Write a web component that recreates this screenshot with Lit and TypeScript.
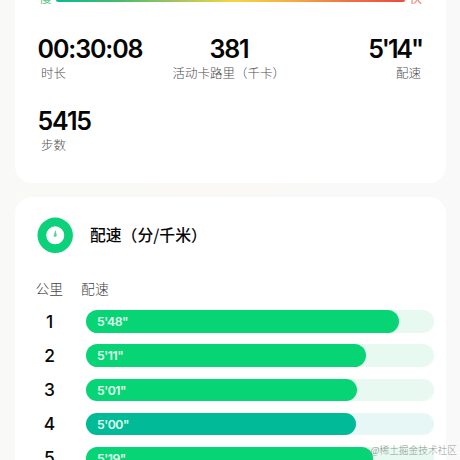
import { LitElement, html, css, svg } from "lit";
import { customElement, property } from "lit/decorators.js";
import { styleMap } from "lit/directives/style-map.js";

@customElement("stat-item")
class StatItem extends LitElement {
  @property() value = "";
  @property() label = "";
  @property({ reflect: true }) align = "start";

  static styles = css`
    :host { display: flex; flex-direction: column; }
    :host([align="center"]) { align-items: center; }
    :host([align="end"]) { align-items: flex-end; }
    .value {
      font: 600 25px/31px Inter, "Noto Sans CJK SC", sans-serif;
      letter-spacing: -1.1px;
      color: #050505;
      white-space: nowrap;
      height: 30px;
      margin-left: -0.5px;
    }
    .label {
      font: 300 12.5px/18px "Noto Sans CJK SC", sans-serif;
      color: #4c4c4c;
      white-space: nowrap;
      padding: 0 3px;
      height: 18px;
    }
    :host([align="center"]) .label { padding: 0 3px 0 0; }
    :host([align="center"]) .value { margin-left: -2.5px; }
    :host([align="end"]) .label { padding: 0 1.5px; }
    :host([align="end"]) .value { letter-spacing: -2.1px; margin-right: 0.6px; }
  `;

  render() {
    return html`
      <div class="value">${this.value}</div>
      <div class="label">${this.label}</div>
    `;
  }
}

@customElement("pace-row")
class PaceRow extends LitElement {
  @property({ type: Number }) km = 0;
  @property() pace = "";
  @property({ type: Number }) share = 0;
  @property({ type: Boolean, reflect: true }) best = false;

  static styles = css`
    :host { display: flex; align-items: center; height: 22.6px; }
    .km {
      width: 28px;
      margin-right: 22px;
      text-align: center;
      font: 500 17.4px/22px Inter, sans-serif;
      color: #080808;
    }
    .track { width: 348px; height: 22.6px; border-radius: 12px; background: #e7f9f1; }
    .fill {
      box-sizing: border-box;
      height: 100%;
      border-radius: 12px;
      background: #07d474;
      padding-left: 11.5px;
      font: 600 12.3px/24px Inter, sans-serif;
      letter-spacing: -0.5px;
      color: #e2fdef;
    }
    :host([best]) .track { background: #e6f7f5; }
    :host([best]) .fill { background: #00ba98; }
  `;

  render() {
    return html`
      <div class="km">${this.km}</div>
      <div class="track">
        <div class="fill" style=${styleMap({ width: `${this.share}%` })}>${this.pace}</div>
      </div>
    `;
  }
}

const splits = [
  { km: 1, pace: `5'48"`, share: 90 },
  { km: 2, pace: `5'11"`, share: 80.5 },
  { km: 3, pace: `5'01"`, share: 77.9 },
  { km: 4, pace: `5'00"`, share: 77.6, best: true },
  { km: 5, pace: `5'19"`, share: 82.5 },
];

const paceIcon = svg`
  <circle cx="18.2" cy="18.3" r="17.7" fill="#0bd17a"/>
  <circle cx="18.2" cy="18.3" r="9" fill="#fff"/>
  <path d="M18.6 12.8 L19.7 17.9 A1.6 1.6 0 1 1 16.7 17.9 Z" fill="#62d3a0"/>
`;

@customElement("app-root")
class AppRoot extends LitElement {
  static styles = css`
    :host {
      display: block;
      position: relative;
      width: 460px;
      height: 460px;
      overflow: hidden;
      background: linear-gradient(90deg, #f9f9f8, #faf9f8 50%, #f9f9f9);
      font-family: "Noto Sans CJK SC", sans-serif;
    }
    .page { display: flex; flex-direction: column; gap: 14px; padding: 0 14px 0 14.5px; }
    .card { background: #fff; box-sizing: border-box; }
    .summary { height: 183px; border-radius: 0 0 17px 17px; padding: 0 23.5px; }
    .scale { display: flex; height: 34px; justify-content: space-between; }
    .edge { width: 13px; font-size: 12.5px; line-height: 18px; margin-top: -11px; }
    .slow { color: #62c787; margin-left: 1px; }
    .fast { color: #ea7865; }
    .ramp {
      width: 349px;
      height: 2px;
      border-radius: 0 0 2px 2px;
      background: linear-gradient(90deg, #06bd91, #45bb70 18%, #a8c55d 35%, #f5d643 51%, #f4ac42 68%, #ef7045 84%, #e94c40);
    }
    .stats { display: grid; grid-template-columns: 105px 1fr 105px; row-gap: 24px; }
    .splits { height: 300px; border-radius: 17px 17px 0 0; padding: 20px 0 0 21px; }
    .title { display: flex; align-items: center; gap: 17px; height: 36px; padding-left: 1.5px; }
    .icon { width: 36px; height: 36px; }
    .name { font-size: 15.8px; font-weight: 500; line-height: 24px; margin-top: -1px; color: #080808; }
    .heads { display: flex; gap: 18px; margin-top: 25px; font-size: 13.8px; font-weight: 300; line-height: 20px; color: #444; }
    .rows { display: flex; flex-direction: column; gap: 11.6px; margin-top: 12.3px; }
    .mark {
      position: absolute;
      right: 3px;
      bottom: 2px;
      font: 300 9.7px/14px "Liberation Serif", "Noto Sans CJK SC", serif;
      color: #8f9994;
      white-space: nowrap;
    }
  `;

  render() {
    return html`
      <div class="page">
        <section class="card summary">
          <div class="scale">
            <span class="edge slow">慢</span>
            <div class="ramp"></div>
            <span class="edge fast">快</span>
          </div>
          <div class="stats">
            <stat-item value="00:30:08" label="时长"></stat-item>
            <stat-item value="381" label="活动卡路里（千卡）" align="center"></stat-item>
            <stat-item value=${`5'14"`} label="配速" align="end"></stat-item>
            <stat-item value="5415" label="步数"></stat-item>
          </div>
        </section>
        <section class="card splits">
          <div class="title">
            <svg class="icon" viewBox="0 0 36 36">${paceIcon}</svg>
            <span class="name">配速（分/千米）</span>
          </div>
          <div class="heads"><span>公里</span><span>配速</span></div>
          <div class="rows">
            ${splits.map((s) => html`
              <pace-row .km=${s.km} .pace=${s.pace} .share=${s.share} .best=${!!s.best}></pace-row>
            `)}
          </div>
        </section>
      </div>
      <div class="mark">@稀土掘金技术社区</div>
    `;
  }
}
